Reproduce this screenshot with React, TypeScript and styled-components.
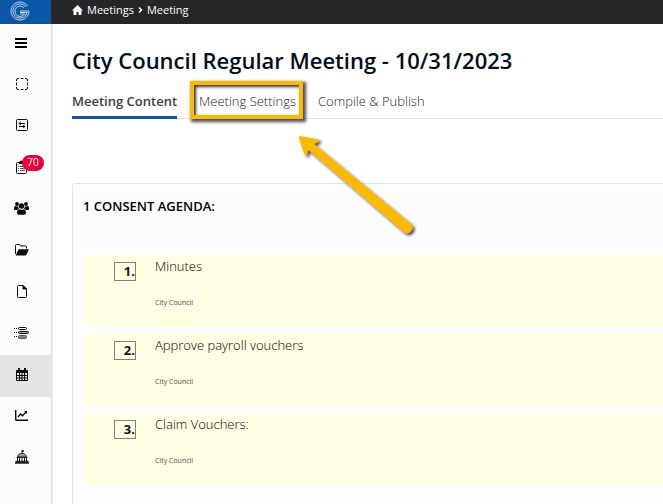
import React from "react";
import styled, { createGlobalStyle } from "styled-components";

const GlobalStyle = createGlobalStyle`
  * { box-sizing: border-box; }
  html, body { margin: 0; background: #fff; overflow: hidden; }
  body { font-family: "Open Sans", "Noto Sans", sans-serif; font-size: 13px; color: #111; }
  button { font: inherit; color: inherit; background: none; border: 0; padding: 0; cursor: pointer; }
  a { color: inherit; text-decoration: none; }
`;

const Shell = styled.div`
  display: grid;
  grid-template-columns: 51px minmax(0, 1fr);
  grid-template-rows: 24px auto;
  height: 100vh;
  overflow: hidden;
`;

const Brand = styled.a`
  display: flex;
  align-items: center;
  justify-content: center;
  padding: 0 11px 3px 0;
  background: #0c56a7;
  overflow: hidden;
`;

const TopBar = styled.header`
  display: flex;
  align-items: center;
  padding: 0 21px 4px;
  background: #262626;
  color: #fff;
  font-size: 11px;
`;

const Crumbs = styled.nav`
  display: flex;
  align-items: center;
  gap: 4px;
  line-height: 16px;
`;

const CrumbLink = styled.a`
  display: inline-flex;
  align-items: center;
  gap: 4px;
`;

const SideBar = styled.nav`
  background: #fcfcfc;
  box-shadow: 1px 0 2px rgba(0, 0, 0, 0.2);
  color: #0a0a0a;
`;

const MenuButton = styled.button`
  display: flex;
  align-items: center;
  justify-content: center;
  width: 100%;
  height: 41px;
  padding: 0 10px 3px 0;
`;

const SideList = styled.ul`
  list-style: none;
  margin: 0;
  padding: 0;
`;

const SideItem = styled.li`
  height: 41px;
  &:nth-child(even) { height: 42px; }
`;

const SideLink = styled.a<{ $active?: boolean }>`
  position: relative;
  display: flex;
  align-items: center;
  justify-content: center;
  height: 100%;
  padding: 0 8px 4px 0;
  background: ${(p) => (p.$active ? "#e4e4e4" : "transparent")};
`;

const Badge = styled.span`
  position: absolute;
  left: 22px;
  top: 7px;
  width: 22px;
  height: 16px;
  border-radius: 8px;
  background: #e6003c;
  color: #fff;
  font-size: 10px;
  line-height: 15px;
  text-align: center;
`;

const Main = styled.main`
  padding: 20px 0 0 21px;
  overflow: hidden;
`;

const Title = styled.h1`
  margin: 0;
  font-size: 22px;
  font-weight: 600;
  line-height: 32px;
  color: #000d1a;
  white-space: nowrap;
`;

const Tabs = styled.div`
  display: flex;
  gap: 22px;
  margin-top: 12px;
  border-bottom: 1px solid #e4e4e4;
`;

const Tab = styled.button<{ $active?: boolean }>`
  position: relative;
  height: 31px;
  padding-bottom: 3px;
  margin-bottom: -1px;
  border-bottom: 3px solid ${(p) => (p.$active ? "#0c56a7" : "transparent")};
  color: ${(p) => (p.$active ? "#404040" : "#262626")};
  font-weight: ${(p) => (p.$active ? 600 : 300)};
  line-height: 18px;
  white-space: nowrap;
`;

const Highlight = styled.span`
  position: absolute;
  inset: -7px -7px -3px -9px;
  border: 4px solid #fbba00;
  box-shadow: 2px 2px 3px 1px rgba(20, 15, 30, 0.75), inset 2px 2px 3px rgba(20, 15, 30, 0.85);
  pointer-events: none;
`;

const Card = styled.section`
  margin-top: 64px;
  padding: 5px 0 0 5px;
  border: 1px solid #e4e4e4;
  border-right: 0;
  border-bottom: 0;
  border-radius: 4px 0 0 0;
  background: #fcfcfc;
  min-height: 340px;
`;

const Section = styled.div`
  padding: 6px 0 9px 5px;
  border: 1px solid #fff;
  border-right: 0;
  margin-bottom: 5px;
`;

const SectionTitle = styled.h2`
  margin: 0 0 38px -1px;
  font-size: 13px;
  font-weight: 600;
  line-height: 20px;
  color: #000;
`;

const Agenda = styled.ol`
  list-style: none;
  margin: 0;
  padding: 0;
  display: grid;
  gap: 5px;
`;

const AgendaItem = styled.li`
  display: grid;
  grid-template-columns: 22px 1fr;
  column-gap: 19px;
  align-items: start;
  height: 74px;
  padding: 2px 0 0 30px;
  border: 1px solid #fff;
  border-right: 0;
  border-left: 0;
  background: #ffffe3;
`;

const NumberBox = styled.span`
  height: 19px;
  margin-top: 5px;
  border: 1px solid #808080;
  font-weight: 700;
  line-height: 17px;
  text-align: right;
`;

const ItemTitle = styled.div`
  color: #000;
  font-weight: 300;
  line-height: 18px;
`;

const Owner = styled.div`
  margin-top: 23px;
  font-size: 7px;
  line-height: 10px;
  color: #505050;
`;

const Arrow = styled.svg`
  position: absolute;
  left: 290px;
  top: 126px;
  pointer-events: none;
`;

const GLogo = () => (
  <svg width="20" height="20" viewBox="0 0 20 20" fill="none" stroke="#d5e4f4" strokeWidth="0.9">
    <path d="M17.500 5A9 9 0 1 0 19 10H10" />
    <path d="M15.800 5.800A7.100 7.100 0 1 0 17 11.500H10" />
    <path d="M14 6.700A5.200 5.200 0 1 0 14.600 13H10" />
  </svg>
);

const HomeIcon = () => (
  <svg width="11" height="10" viewBox="0 0 11 10" fill="#fff">
    <path d="M5.500 0L11 5.500H9.500V10h-3V7h-2v3h-3V5.500H0z" />
  </svg>
);

const MenuIcon = () => (
  <svg width="12" height="10" viewBox="0 0 12 10" fill="#000">
    <path d="M0 0h12v2H0zM0 4h12v2H0zM0 8h12v2H0z" />
  </svg>
);

const DashedIcon = () => (
  <svg width="12" height="12" viewBox="0 0 12 12" fill="none" stroke="currentColor">
    <path d="M.5 3V2A1.500 1.500 0 0 1 2 .5h1M4.500.5h3M9 .5h1A1.500 1.500 0 0 1 11.500 2v1M11.500 4.500v3M11.500 9v1a1.500 1.500 0 0 1-1.500 1.500H9M7.500 11.500h-3M3 11.500H2A1.500 1.500 0 0 1 .5 10V9M.5 7.500v-3" />
  </svg>
);

const SwapIcon = () => (
  <svg width="12" height="12" viewBox="0 0 12 12" fill="none" stroke="currentColor">
    <rect x=".5" y=".5" width="11" height="11" rx="1" />
    <path d="M3 4.500h6M3 7.500h6" />
    <path d="M4.800 2.500v4L2.500 4.500zM7.200 5.500v4l2.300-2z" fill="currentColor" stroke="none" />
  </svg>
);

const ClipboardIcon = () => (
  <svg width="12" height="14" viewBox="0 0 12 14" fill="none" stroke="currentColor">
    <rect x=".5" y="2.500" width="10" height="11" rx="1" />
    <path d="M3 3.500V2h1.500a1 1 0 0 1 2 0H8v1.500z" fill="currentColor" />
    <path d="M4 6.500h5M4 8.500h5M4 10.500h5M2 6.500h1M2 8.500h1M2 10.500h1" strokeWidth=".7" />
  </svg>
);

const UsersIcon = () => (
  <svg width="15" height="13" viewBox="0 0 15 13" fill="currentColor">
    <circle cx="3" cy="2" r="1.900" />
    <circle cx="12" cy="2" r="1.900" />
    <circle cx="7.500" cy="4" r="2.700" />
    <path d="M0 7V5.700Q0 4 1.300 4q1.600.8 2.800.3.100 1.500.9 2.600Q3.700 7 3 8H1Q0 8 0 7zM15 7V5.700Q15 4 13.700 4q-1.600.8-2.800.3-.1 1.500-.9 2.600 1.300.1 2 1.100h2Q15 8 15 7z" />
    <path d="M3 11Q3 7.200 5.300 7.200q2.200 1.300 4.400 0Q12 7.200 12 11q0 1.800-1.800 1.800H4.800Q3 12.800 3 11z" />
  </svg>
);

const FolderIcon = () => (
  <svg width="14" height="12" viewBox="0 0 14 12">
    <path d="M.5 10V1.500a1 1 0 0 1 1-1h3l1 1.500h5a1 1 0 0 1 1 1v1.500" fill="none" stroke="currentColor" />
    <path d="M.6 11.500L3.200 6q.3-.7 1-.7H14L11.500 10.500q-.4 1-1.400 1z" fill="currentColor" />
  </svg>
);

const FileIcon = () => (
  <svg width="10" height="13" viewBox="0 0 10 13" fill="none" stroke="currentColor">
    <path d="M1.500.5H6l3.500 3.500v7.500a1 1 0 0 1-1 1h-7a1 1 0 0 1-1-1v-10a1 1 0 0 1 1-1z" />
    <path d="M6 .5V4h3.500z" fill="currentColor" />
  </svg>
);

const ListIcon = () => (
  <svg width="15" height="12" viewBox="0 0 15 12" fill="none" stroke="currentColor">
    <path d="M0 1.500h1M2 1.500h1M0 5.500h1M2 5.500h1M0 9.500h1M2 9.500h1" />
    <rect x="4.500" y=".5" width="8" height="2" rx="1" />
    <rect x="4.500" y="4.500" width="10" height="2" rx="1" fill="#aaa" />
    <rect x="4.500" y="8.500" width="8" height="3" rx="1" fill="#888" stroke="#555" />
  </svg>
);

const CalendarIcon = () => (
  <svg width="12" height="13" viewBox="0 0 12 13" fill="currentColor">
    <path d="M2 0h2v2h4V0h2v2h1a1 1 0 0 1 1 1v9a1 1 0 0 1-1 1H1a1 1 0 0 1-1-1V3a1 1 0 0 1 1-1h1z" />
    <path d="M1 5h2v2H1zM4 5h1.500v2H4zM6.500 5H8v2H6.500zM9 5h2v2H9zM1 8h2v1.500H1zM4 8h1.500v1.500H4zM6.500 8H8v1.500H6.500zM9 8h2v1.500H9zM1 10.500h2V12H1zM4 10.500h1.500V12H4zM6.500 10.500H8V12H6.500zM9 10.500h2V12H9z" fill="#e4e4e4" />
  </svg>
);

const ChartIcon = () => (
  <svg width="13" height="11" viewBox="0 0 13 11" fill="none" stroke="currentColor">
    <path d="M.7 0v9.500q0 .8.800.8H13" strokeWidth="1.400" />
    <path d="M3 7l2.500-3 2 1.800L11 2" strokeWidth="1.300" />
    <path d="M9 1h3v3z" fill="currentColor" stroke="none" />
  </svg>
);

const CapitolIcon = () => (
  <svg width="14" height="14" viewBox="0 0 14 14" fill="none" stroke="#222">
    <path d="M7 3V.5h1.500v1H7" />
    <path d="M2.500 7C3 4.500 5 3.300 7 3.300S11 4.500 11.500 7z" fill="#999" />
    <path d="M1.500 7.500h11M2.500 8v3M4.500 8v3M7 8v3M9.500 8v3M11.500 8v3" />
    <path d="M0 13h14M.5 11.500h13" strokeWidth="1.500" />
  </svg>
);

const sideItems: { label: string; icon: React.ReactNode; badge?: string; active?: boolean }[] = [
  { label: "Selection", icon: <DashedIcon /> },
  { label: "Transfers", icon: <SwapIcon /> },
  { label: "Tasks", icon: <ClipboardIcon />, badge: "70" },
  { label: "Groups", icon: <UsersIcon /> },
  { label: "Folders", icon: <FolderIcon /> },
  { label: "Documents", icon: <FileIcon /> },
  { label: "Lists", icon: <ListIcon /> },
  { label: "Calendar", icon: <CalendarIcon />, active: true },
  { label: "Reports", icon: <ChartIcon /> },
  { label: "Government", icon: <CapitolIcon /> },
];

const agenda = ["Minutes", "Approve payroll vouchers", "Claim Vouchers:"];

export default function App() {
  return (
    <>
      <GlobalStyle />
      <Shell>
        <Brand href="#" aria-label="Home"><GLogo /></Brand>
        <TopBar>
          <Crumbs aria-label="Breadcrumb">
            <CrumbLink href="#"><HomeIcon />Meetings</CrumbLink>
            <svg width="5" height="6" viewBox="0 0 5 6" fill="none" stroke="#fff" strokeWidth="1.500"><path d="M1 .5L3.500 3 1 5.500" /></svg>
            <CrumbLink href="#">Meeting</CrumbLink>
          </Crumbs>
        </TopBar>
        <SideBar aria-label="Main">
          <MenuButton aria-label="Menu"><MenuIcon /></MenuButton>
          <SideList>
            {sideItems.map((item) => (
              <SideItem key={item.label}>
                <SideLink href="#" aria-label={item.label} $active={item.active}>
                  {item.icon}
                  {item.badge && <Badge>{item.badge}</Badge>}
                </SideLink>
              </SideItem>
            ))}
          </SideList>
        </SideBar>
        <Main>
          <Title>City Council Regular Meeting - 10/31/2023</Title>
          <Tabs role="tablist">
            <Tab role="tab" aria-selected $active>Meeting Content</Tab>
            <Tab role="tab">Meeting Settings<Highlight /></Tab>
            <Tab role="tab">Compile &amp; Publish</Tab>
          </Tabs>
          <Card>
            <Section>
              <SectionTitle>1 CONSENT AGENDA:</SectionTitle>
              <Agenda>
                {agenda.map((title, i) => (
                  <AgendaItem key={title}>
                    <NumberBox>{i + 1}.</NumberBox>
                    <div>
                      <ItemTitle>{title}</ItemTitle>
                      <Owner>City Council</Owner>
                    </div>
                  </AgendaItem>
                ))}
              </Agenda>
            </Section>
            <Section />
          </Card>
        </Main>
      </Shell>
      <Arrow width="140" height="120" viewBox="290 126 140 120" aria-hidden="true">
        <defs>
          <filter id="arrow-shadow" x="-20%" y="-20%" width="140%" height="140%">
            <feDropShadow dx="2" dy="2" stdDeviation="1.500" floodColor="#140f1e" floodOpacity="0.8" />
          </filter>
        </defs>
        <g filter="url(#arrow-shadow)" fill="#fbba00">
          <path d="M300 136L319 139.500Q321 141 314 144L411.500 224.500A5.500 5.500 0 0 1 404.500 232.500L308.500 150Q307 156 305.500 155.500Q304 154 299 138Q299 136 300 136Z" />
        </g>
      </Arrow>
    </>
  );
}
